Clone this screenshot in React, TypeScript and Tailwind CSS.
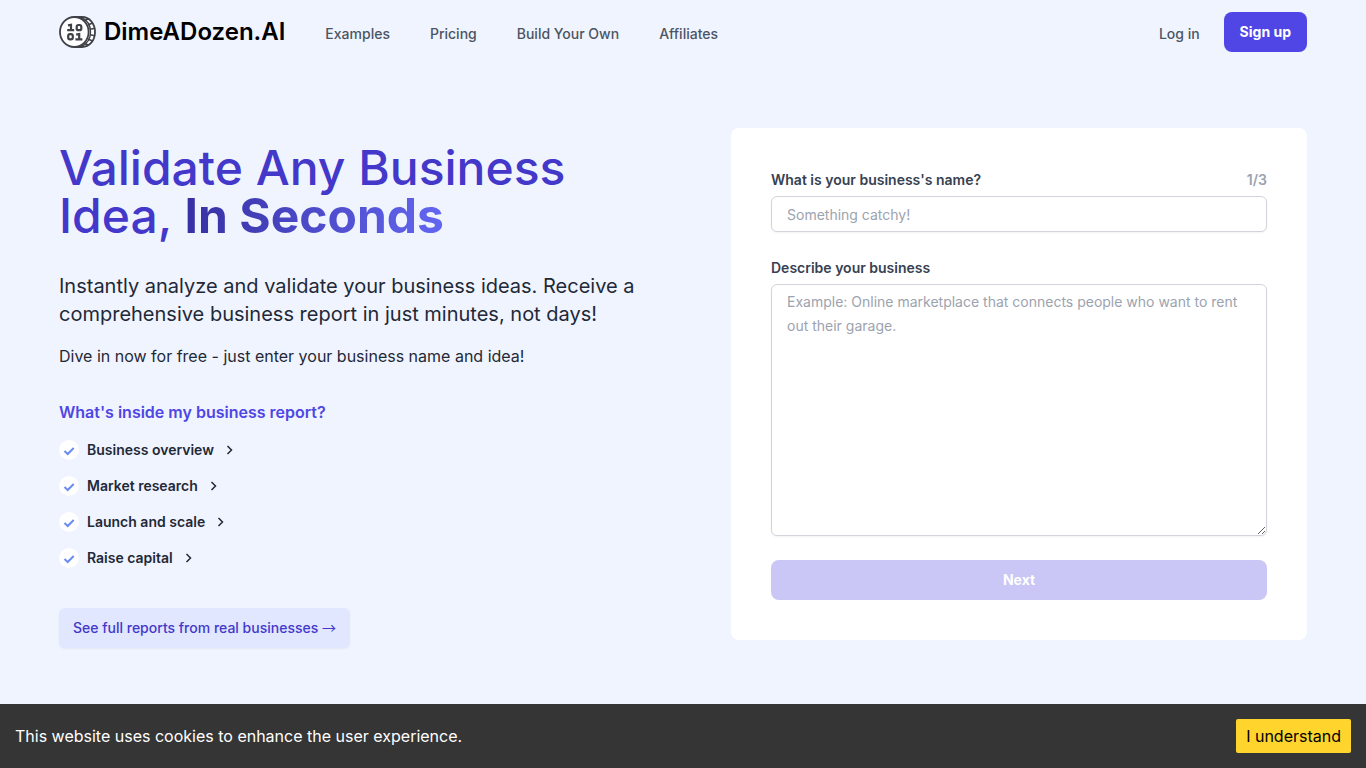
import React from "react";

const navLinks = ["Examples", "Pricing", "Build Your Own", "Affiliates"];
const sections = ["Business overview", "Market research", "Launch and scale", "Raise capital"];

function CoinLogo() {
  return (
    <svg width="37" height="32" viewBox="0 0 37 32" fill="none" stroke="#3f4048" aria-hidden="true">
      <path d="M16 1h7c7.500 0 13 6.500 13 15s-5.500 15-13 15h-7" fill="#fff" strokeWidth="1.800" />
      <path d="M22 1.500c6 2.500 9.500 8 9.500 14.500s-3.500 12-9.500 14.500" strokeWidth="1.400" />
      <path d="M25.500 4.800l4-2M29 9l4.500-2M31 13.300l5-1M31 18.700l5 1M29 23l4.500 2M25.500 27.200l4 2" strokeWidth="1.600" />
      <ellipse cx="15.300" cy="16" rx="14.300" ry="15" fill="#fff" strokeWidth="1.800" />
      <g strokeWidth="2.200">
        <path d="M9 9.400l3-.6v5.400M8.200 14.200h7" />
        <rect x="17.700" y="9" width="4.600" height="5.200" rx="1.800" />
        <rect x="9.200" y="18.200" width="4.600" height="5.200" rx="1.800" />
        <path d="M17.200 18.600l3-.6v5.400M16.400 23.400h7" />
      </g>
    </svg>
  );
}

function CheckBadge() {
  return (
    <span className="flex size-5 items-center justify-center rounded-full bg-white">
      <svg width="20" height="20" viewBox="0 0 20 20" fill="none" stroke="#6b8cf2" strokeWidth="2" aria-hidden="true">
        <path d="M5.500 11l3.200 3 6-6" />
      </svg>
    </span>
  );
}

function Chevron() {
  return (
    <svg width="16" height="16" viewBox="0 0 16 16" fill="none" stroke="currentColor" strokeWidth="1.500" aria-hidden="true">
      <path d="M5.500 4l4 4-4 4" />
    </svg>
  );
}

function Header() {
  return (
    <header className="mx-auto flex h-16 w-full max-w-7xl items-center px-4">
      <a href="#" className="flex items-center gap-2 text-2xl font-semibold text-black">
        <CoinLogo />
        DimeADozen.AI
      </a>
      <nav className="ml-10 flex gap-10 pt-1 text-sm font-medium text-[#4b5563]">
        {navLinks.map((link) => (
          <a key={link} href="#">{link}</a>
        ))}
      </nav>
      <div className="ml-auto flex items-center gap-6 text-sm">
        <a href="#" className="pt-1 font-medium text-[#4b5563]">Log in</a>
        <a href="#" className="rounded-lg bg-[#4f46e5] px-4 py-2.5 font-bold text-white">Sign up</a>
      </div>
    </header>
  );
}

function Intro() {
  return (
    <section className="flex flex-col items-start pt-4">
      <h1 className="text-5xl leading-none font-medium text-[#4338ca]">
        Validate Any Business Idea,{" "}
        <span className="bg-linear-to-r from-[#3730a3] to-[#6366f1] bg-clip-text font-bold text-transparent">In Seconds</span>
      </h1>
      <p className="mt-8 text-xl leading-7 text-[#1f2937]">
        Instantly analyze and validate your business ideas. Receive a comprehensive business report in just minutes, not days!
      </p>
      <p className="mt-4 text-base text-[#1f2937]">
        Dive in now for free - just enter your business name and idea!
      </p>
      <h2 className="mt-8 text-base font-semibold text-[#4f46e5]">What's inside my business report?</h2>
      <ul className="mt-4 flex flex-col items-start gap-4">
        {sections.map((name) => (
          <li key={name}>
            <button type="button" className="flex items-center gap-2 text-sm font-semibold text-[#1f2937]">
              <CheckBadge />
              {name}
              <Chevron />
            </button>
          </li>
        ))}
      </ul>
      <a href="#" className="mt-10 rounded-md bg-[#e0e7ff] px-3.5 py-2.5 text-sm font-medium text-[#4338ca] shadow-xs">
        See full reports from real businesses{" "}
        <span className="font-['Noto_Sans_CJK_JP',sans-serif] leading-none font-normal">→</span>
      </a>
    </section>
  );
}

function BusinessForm() {
  return (
    <form className="flex flex-col self-start rounded-lg bg-white p-10 text-sm text-[#374151]" onSubmit={(e) => e.preventDefault()}>
      <div className="flex justify-between leading-6 font-semibold">
        <label htmlFor="name">What is your business's name?</label>
        <span className="text-[#9ca3af]">1/3</span>
      </div>
      <input
        id="name"
        type="text"
        placeholder="Something catchy!"
        className="mt-1 h-9 w-full rounded-md border border-[#d1d5db] bg-white px-[15px] shadow-xs placeholder:text-[#9ca3af]"
      />
      <label htmlFor="description" className="mt-6 leading-6 font-semibold">Describe your business</label>
      <textarea
        id="description"
        placeholder="Example: Online marketplace that connects people who want to rent out their garage."
        className="mt-1 h-63 w-full rounded-md border border-[#d1d5db] bg-white px-[15px] py-[5px] leading-6 shadow-xs placeholder:text-[#9ca3af]"
      />
      <button type="submit" disabled className="mt-6 h-10 rounded-lg bg-[#cac6f5] font-bold text-white">Next</button>
    </form>
  );
}

function CookieBar() {
  return (
    <aside className="fixed inset-x-0 bottom-0 flex h-16 items-center justify-between bg-[#353535] px-[15px] text-base text-white">
      <p>This website uses cookies to enhance the user experience.</p>
      <button type="button" className="rounded-xs bg-[#ffd42d] px-2.5 py-[5px] text-black">I understand</button>
    </aside>
  );
}

export default function App() {
  return (
    <div className="min-h-screen bg-[#f0f4ff] font-[Inter,sans-serif]">
      <Header />
      <main className="mx-auto grid w-full max-w-7xl grid-cols-2 gap-24 px-4 pt-16 pb-16">
        <Intro />
        <BusinessForm />
      </main>
      <CookieBar />
    </div>
  );
}
